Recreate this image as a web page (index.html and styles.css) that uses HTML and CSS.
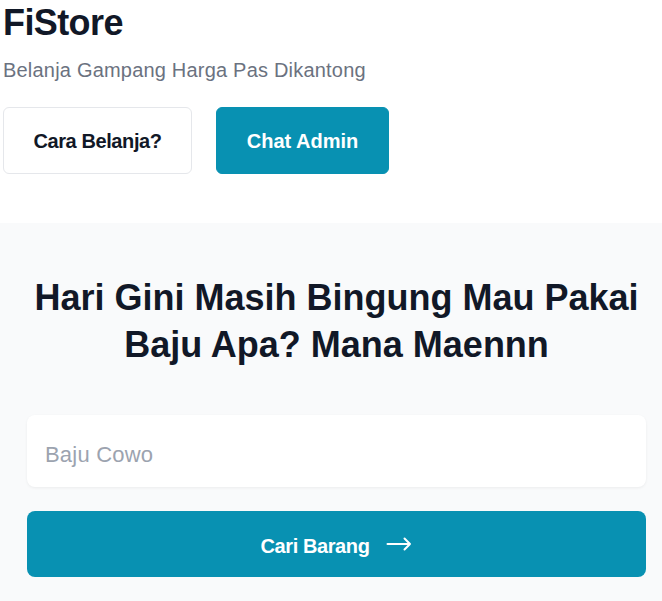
FILE: index.html
```html
<!DOCTYPE html>
<html lang="id">
<head>
<meta charset="utf-8">
<title>FiStore</title>
<link rel="stylesheet" href="styles.css">
</head>
<body>
  <header class="top">
    <h1 class="brand">FiStore</h1>
    <p class="tagline">Belanja Gampang Harga Pas Dikantong</p>
    <div class="actions">
      <a class="btn btn-outline" href="#">Cara Belanja?</a>
      <a class="btn btn-primary" href="#">Chat Admin</a>
    </div>
  </header>
  <section class="hero">
    <h2 class="hero-title">Hari Gini Masih Bingung Mau Pakai Baju Apa? Mana Maennn</h2>
    <form class="search" onsubmit="return false">
      <input class="search-input" type="text" placeholder="Baju Cowo">
      <button class="search-btn" type="submit">
        <span>Cari Barang</span>
        <svg class="arrow" width="26" height="16" viewBox="0 0 26 16" fill="none" stroke="currentColor" stroke-width="2" stroke-linecap="round" stroke-linejoin="round"><path d="M1.5 8H24M18.5 2.5L24 8L18.5 13.5"/></svg>
      </button>
    </form>
  </section>
</body>
</html>
```

FILE: styles.css
```css
* { box-sizing: border-box; }

body {
  margin: 0;
  font-family: "Liberation Sans", Arial, sans-serif;
  color: #111827;
  background: #ffffff;
}

.top {
  padding: 3px 3px 0;
}

.brand {
  margin: 0;
  font-size: 36px;
  line-height: 40px;
  font-weight: 700;
  letter-spacing: -0.6px;
  color: #111827;
}

.tagline {
  margin: 13px 0 0;
  font-size: 20px;
  line-height: 28px;
  letter-spacing: 0.2px;
  color: #6b7280;
}

.actions {
  display: flex;
  gap: 24px;
  margin-top: 23px;
}

.btn {
  display: block;
  height: 67px;
  padding: 19px 0 0;
  border: 1px solid #e5e7eb;
  border-radius: 6px;
  font-size: 20px;
  line-height: 28px;
  font-weight: 700;
  text-align: center;
  text-decoration: none;
}

.btn-outline {
  width: 189px;
  background: #ffffff;
  color: #111827;
  letter-spacing: -0.4px;
}

.btn-primary {
  width: 173px;
  background: #0891b2;
  border-color: #0891b2;
  color: #ffffff;
}

.hero {
  margin-top: 49px;
  background: #f9fafb;
  padding: 51px 16px 30px 27px;
}

.hero-title {
  margin: 0;
  text-align: center;
  font-size: 36px;
  line-height: 47px;
  font-weight: 700;
  color: #111827;
}

.search {
  margin-top: 47px;
  display: flex;
  flex-direction: column;
  gap: 24px;
}

.search-input {
  display: block;
  width: 100%;
  height: 72px;
  padding: 8px 18px 0;
  border: none;
  border-radius: 8px;
  background: #ffffff;
  box-shadow: 0 1px 3px rgba(0, 0, 0, 0.06);
  font-family: inherit;
  font-size: 22px;
  letter-spacing: 0.2px;
  color: #111827;
  outline: none;
}

.search-input::placeholder {
  color: #9ca3af;
}

.search-btn {
  display: flex;
  align-items: center;
  justify-content: center;
  gap: 17px;
  width: 100%;
  height: 66px;
  padding: 4px 0 0;
  border: none;
  border-radius: 8px;
  background: #0891b2;
  color: #ffffff;
  font-family: inherit;
  font-size: 20px;
  font-weight: 700;
  letter-spacing: -0.4px;
  cursor: pointer;
}

.arrow {
  display: block;
  margin-top: -4px;
}
```
